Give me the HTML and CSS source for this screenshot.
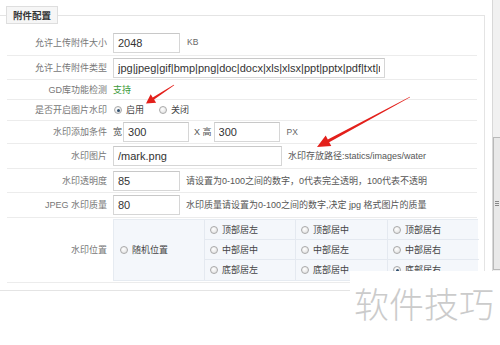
FILE: index.html
```html
<!DOCTYPE html>
<html lang="zh">
<head>
<meta charset="utf-8">
<link rel="stylesheet" href="styles.css">
</head>
<body>
<div class="page">
  <main class="main">
    <fieldset class="panel">
      <legend class="legend">附件配置</legend>
      <div class="rows">
        <div class="row r1">
          <div class="label">允许上传附件大小</div>
          <div class="field">
            <input class="inp w67" type="text" value="2048">
            <span class="unit kb">KB</span>
          </div>
        </div>
        <div class="row r2">
          <div class="label">允许上传附件类型</div>
          <div class="field">
            <input class="inp w272" type="text" value="jpg|jpeg|gif|bmp|png|doc|docx|xls|xlsx|ppt|pptx|pdf|txt|rar|zip|swf">
          </div>
        </div>
        <div class="row r3">
          <div class="label">GD库功能检测</div>
          <div class="field"><span class="ok">支持</span></div>
        </div>
        <div class="row r4">
          <div class="label">是否开启图片水印</div>
          <div class="field">
            <label class="opt"><span class="radio on"></span>启用</label>
            <label class="opt opt2"><span class="radio"></span>关闭</label>
          </div>
        </div>
        <div class="row r5">
          <div class="label">水印添加条件</div>
          <div class="field">
            <span class="txt">宽</span>
            <input class="inp w66" type="text" value="300">
            <span class="txt xh">X 高</span>
            <input class="inp w66" type="text" value="300">
            <span class="unit px">PX</span>
          </div>
        </div>
        <div class="row r6">
          <div class="label">水印图片</div>
          <div class="field">
            <input class="inp w170" type="text" value="/mark.png">
            <span class="help">水印存放路径:statics/images/water</span>
          </div>
        </div>
        <div class="row r7">
          <div class="label">水印透明度</div>
          <div class="field">
            <input class="inp w67" type="text" value="85">
            <span class="help">请设置为0-100之间的数字，0代表完全透明，100代表不透明</span>
          </div>
        </div>
        <div class="row r8">
          <div class="label">JPEG 水印质量</div>
          <div class="field">
            <input class="inp w67" type="text" value="80">
            <span class="help">水印质量请设置为0-100之间的数字,决定 jpg 格式图片的质量</span>
          </div>
        </div>
        <div class="row r9">
          <div class="label">水印位置</div>
          <div class="field">
            <div class="pos">
              <div class="cell rand"><span class="radio"></span>随机位置</div>
              <div class="cell"><span class="radio"></span>顶部居左</div>
              <div class="cell"><span class="radio"></span>顶部居中</div>
              <div class="cell last"><span class="radio"></span>顶部居右</div>
              <div class="cell"><span class="radio"></span>中部居中</div>
              <div class="cell"><span class="radio"></span>中部居左</div>
              <div class="cell last"><span class="radio"></span>中部居右</div>
              <div class="cell bot"><span class="radio"></span>底部居左</div>
              <div class="cell bot"><span class="radio"></span>底部居中</div>
              <div class="cell bot last"><span class="radio on"></span>底部居右</div>
            </div>
          </div>
        </div>
      </div>
    </fieldset>
  </main>
  <div class="scrollbar">
    <div class="track"></div>
    <div class="thumb"><span class="grip"></span></div>
  </div>
</div>
<svg class="arrows" width="500" height="345" viewBox="0 0 500 345">
  <polygon fill="#e3201b" points="174.2,85.3 154.1,99.5 156.1,102.7 146,103.5 150.7,94.3 152.7,97.5 173.8,84.7"/>
  <polygon fill="#e3201b" points="410.1,97.3 329.2,142.2 331.3,146.1 317,147 325.7,135.6 327.8,139.6 409.9,96.7"/>
</svg>
<div class="mark">软件技巧</div>
</body>
</html>
```

FILE: styles.css
```css
html, body {
  margin: 0;
  padding: 0;
  background: #fff;
  width: 500px;
  height: 345px;
  overflow: hidden;
  font-family: "Liberation Sans", "Noto Sans CJK SC", sans-serif;
  font-size: 9px;
  color: #666;
}
.page {
  display: flex;
  position: relative;
  width: 500px;
  height: 345px;
}
.main {
  width: 492px;
  flex: none;
}
.panel {
  margin: 6px 0 0 0;
  padding: 6px 0 7px 0;
  width: 485px;
  box-sizing: border-box;
  border: 1px solid #e4e4e4;
  border-left: none;
  min-width: 0;
}
.legend {
  margin-left: 6px;
  padding: 0 6px;
  height: 18px;
  line-height: 17px;
  box-sizing: border-box;
  border: 1px solid #dedede;
  background: #f6f6f6;
  color: #333;
  font-weight: bold;
  font-size: 9.5px;
  font-family: "Noto Sans CJK SC", sans-serif;
}
.rows {
  margin-left: 7px;
  width: 470px;
}
.row {
  display: flex;
  align-items: center;
  box-sizing: border-box;
  border-bottom: 1px solid #ececec;
}
.r1 { height: 26px; }
.r2 { height: 24px; }
.r3 { height: 20px; }
.r4 { height: 21px; }
.r5 { height: 23px; }
.r6 { height: 25px; }
.r7 { height: 24px; }
.r8 { height: 25px; }
.r9 { height: 65px; }
.label {
  width: 100px;
  flex: none;
  text-align: right;
  color: #777;
  font-size: 9px;
  line-height: 12px;
}
.field {
  margin-left: 6px;
  display: flex;
  align-items: center;
  flex: 1;
  min-width: 0;
  line-height: 12px;
}
.inp {
  height: 20px;
  box-sizing: border-box;
  border: 1px solid #d6d6d6;
  border-top-color: #c8c8c8;
  background: #fff;
  padding: 0 4px;
  margin: 0;
  font-family: "Liberation Sans", sans-serif;
  font-size: 11px;
  color: #333;
  outline: none;
}
.w67 { width: 67px; }
.w66 { width: 66px; }
.w170 { width: 169px; }
.w272 { width: 272px; }
.unit { color: #666; font-size: 8.5px; }
.kb { margin-left: 7px; margin-top: -2px; }
.px { margin-left: 7px; }
.txt { color: #555; font-size: 9px; }
.r5 .txt:first-child { margin-right: 1px; }
.xh { margin: 0 2px 0 5px; }
.ok { color: #3a9a3a; font-size: 9px; }
.opt {
  display: flex;
  align-items: center;
  color: #444;
  font-size: 9px;
  margin-left: 1px;
}
.opt2 { margin-left: 15px; }
.radio {
  display: inline-block;
  width: 8px;
  height: 8px;
  box-sizing: border-box;
  border-radius: 50%;
  border: 1px solid #a9a9a9;
  background: radial-gradient(circle at 40% 35%, #fff 0, #e6e6e6 70%);
  margin-right: 4px;
  position: relative;
  flex: none;
}
.radio.on::after {
  content: "";
  position: absolute;
  left: 1.5px;
  top: 1.5px;
  width: 3px;
  height: 3px;
  border-radius: 50%;
  background: #2f4f70;
}
.help {
  margin-left: 6px;
  color: #555;
  font-size: 9px;
  white-space: nowrap;
}
.pos {
  display: grid;
  grid-template-columns: 91px 91px 92px 91px;
  grid-template-rows: 20px 20px 20px;
  background: #f4f7fb;
  border: 1px solid #e6ebf1;
  border-right: none;
  width: 365px;
  box-sizing: border-box;
  margin-top: 0;
}
.cell {
  display: flex;
  align-items: center;
  padding-left: 5px;
  box-sizing: border-box;
  border-bottom: 1px solid #e4e9f0;
  border-right: 1px solid #e4e9f0;
  color: #444;
  font-size: 9px;
}
.cell.bot { border-bottom: none; }
.cell.last { border-right: none; }
.rand {
  grid-row: 1 / span 3;
  border-bottom: none;
  padding-left: 6px;
}
.scrollbar {
  width: 8px;
  height: 272px;
  flex: none;
  display: flex;
  flex-direction: column;
  border-left: 1px solid #d8d8d8;
  box-sizing: border-box;
  background: #f1f1f1;
}
.track { height: 137px; flex: none; }
.thumb {
  height: 133px;
  flex: none;
  background: #e9e9e9;
  border: 1px solid #b9b9b9;
  border-right: none;
  box-sizing: border-box;
  display: flex;
  align-items: center;
  justify-content: center;
}
.grip {
  width: 4px;
  height: 5px;
  background: repeating-linear-gradient(#888 0 1px, transparent 1px 2px);
}
.arrows {
  position: absolute;
  left: 0;
  top: 0;
  pointer-events: none;
}
.mark {
  position: absolute;
  left: 350px;
  top: 271px;
  width: 150px;
  height: 74px;
  background: #fff;
  color: #cbcbcb;
  font-family: "Noto Sans CJK SC", sans-serif;
  font-weight: 300;
  font-size: 35px;
  line-height: 36px;
  padding: 14px 0 0 4px;
  box-sizing: border-box;
  letter-spacing: 0;
}
```
